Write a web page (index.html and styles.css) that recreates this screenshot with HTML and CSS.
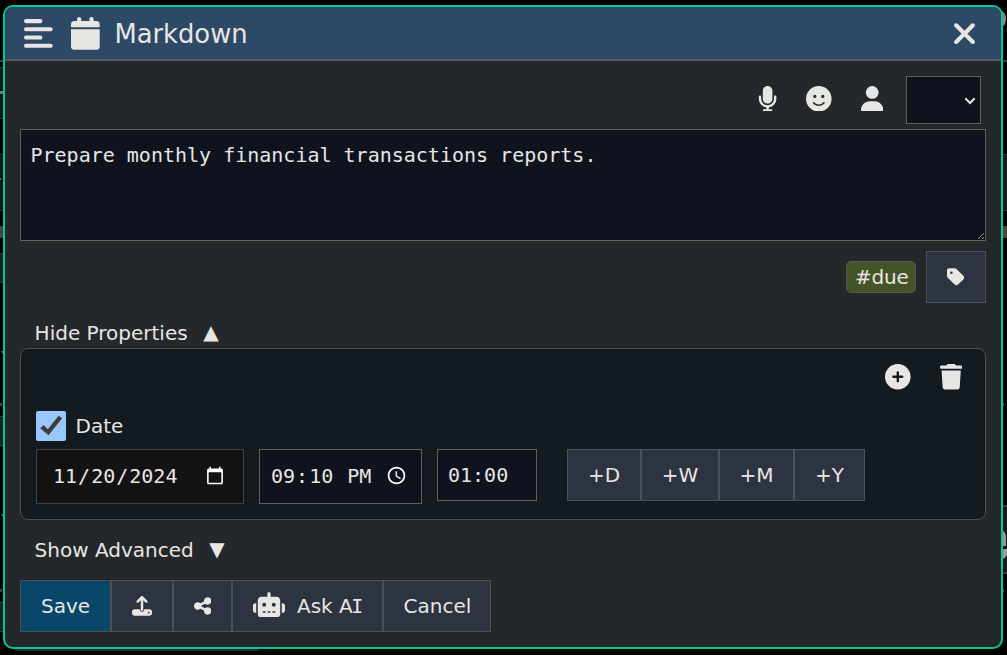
FILE: index.html
```html
<!DOCTYPE html>
<html lang="en">
<head>
<meta charset="utf-8">
<title>Markdown</title>
<link rel="stylesheet" href="styles.css">
</head>
<body>
<svg class="backdrop" width="1007" height="655" aria-hidden="true">
  <path fill="#3c3f41" d="M0 60h4v2H0zM1002 60h5v2h-5z"/>
  <path fill="#111518" d="M0 67h4v51H0zM0 154h4v56H0z"/>
  <path fill="#2e3335" d="M0 67h4v1H0zM0 118h4v1H0zM0 154h4v1H0zM0 210h4v1H0z"/>
  <path fill="#777" d="M0 91h4v3H0z"/>
  <path fill="#8a6a45" d="M0 178h1v2H0z"/>
  <path fill="#4a443c" d="M0 226h4v12H0zM1002 226h5v12h-5z"/>
  <path fill="#1c1f20" stroke="#3c4042" d="M-2 253.500h7v29h-7zM-2 416.500h7v29h-7zM-2 602.500h7v29h-7z"/>
  <path fill="#5b7087" d="M1 351h3v2l-1 1zM1 514h3v2l-1 1z"/>
  <path fill="#444" d="M0 403h2v3H0zM0 589h2v3H0zM1002 403h2v3h-2zM1002 589h2v3h-2z"/>
  <ellipse cx="1001" cy="19" rx="5" ry="8" fill="#93807a"/>
  <path fill="#151719" stroke="#2e3335" d="M1000 154.500h9v56h-9zM1000 506h9v67h-9z"/>
  <path fill="#3e3a33" d="M1002 505h5v2h-5zM1002 572h5v2h-5z"/>
  <path fill="#999" d="M1002 530q4 2 4 8v8h-4zM1002 549h5v6q-2 4-5 4z"/>
  <path fill="#25282a" d="M15 648h244v3H15z"/>
</svg>
<main class="dialog">
  <header class="titlebar">
    <svg class="icon-lg" viewBox="0 0 448 512"><path d="M288 64c0 17.700-14.300 32-32 32H32C14.300 96 0 81.700 0 64S14.300 32 32 32H256c17.700 0 32 14.300 32 32zm0 256c0 17.700-14.300 32-32 32H32c-17.700 0-32-14.300-32-32s14.300-32 32-32H256c17.700 0 32 14.300 32 32zM0 192c0-17.700 14.300-32 32-32H416c17.700 0 32 14.300 32 32s-14.300 32-32 32H32c-17.700 0-32-14.300-32-32zM448 448c0 17.700-14.300 32-32 32H32c-17.700 0-32-14.300-32-32s14.300-32 32-32H416c17.700 0 32 14.300 32 32z"/></svg>
    <svg class="icon-lg" viewBox="0 0 448 512"><path d="M96 32V64H48C21.500 64 0 85.500 0 112v48H448V112c0-26.500-21.500-48-48-48H352V32c0-17.700-14.300-32-32-32s-32 14.300-32 32V64H160V32c0-17.700-14.300-32-32-32S96 14.300 96 32zM448 192H0V464c0 26.500 21.500 48 48 48H400c26.500 0 48-21.500 48-48V192z"/></svg>
    <h1 class="title">Markdown</h1>
    <svg class="icon-close" viewBox="0 0 384 512"><path d="M342.600 150.600c12.500-12.500 12.500-32.800 0-45.300s-32.800-12.500-45.300 0L192 210.700 86.600 105.400c-12.500-12.500-32.800-12.500-45.300 0s-12.500 32.800 0 45.300L146.700 256 41.400 361.400c-12.500 12.500-12.500 32.800 0 45.300s32.800 12.500 45.300 0L192 301.300 297.400 406.600c12.500 12.500 32.800 12.500 45.300 0s12.500-32.800 0-45.300L237.300 256 342.600 150.600z"/></svg>
  </header>
  <div class="content">
    <div class="toolbar">
      <svg class="icon-md" viewBox="0 0 384 512"><path d="M192 0C139 0 96 43 96 96V256c0 53 43 96 96 96s96-43 96-96V96c0-53-43-96-96-96zM64 216c0-13.300-10.700-24-24-24s-24 10.700-24 24v40c0 89.100 66.200 162.700 152 174.400V464H120c-13.300 0-24 10.700-24 24s10.700 24 24 24h144c13.300 0 24-10.700 24-24s-10.700-24-24-24H216V430.400c85.800-11.700 152-85.300 152-174.400V216c0-13.300-10.700-24-24-24s-24 10.700-24 24v40c0 70.700-57.300 128-128 128s-128-57.300-128-128V216z"/></svg>
      <svg class="icon-md" viewBox="0 0 512 512"><path d="M256 512A256 256 0 1 0 256 0a256 256 0 1 0 0 512zM164.100 325.500C182 346.200 212.600 368 256 368s74-21.800 91.900-42.500c5.800-6.700 15.900-7.400 22.600-1.600s7.400 15.900 1.600 22.600C349.800 372.100 311.100 400 256 400s-93.800-27.900-116.100-53.500c-5.800-6.700-5.100-16.800 1.600-22.600s16.800-5.100 22.600 1.600zM144.400 208a32 32 0 1 1 64 0 32 32 0 1 1-64 0zm192-32a32 32 0 1 1 0 64 32 32 0 1 1 0-64z"/></svg>
      <svg class="icon-md" viewBox="0 0 448 512"><path d="M224 256A128 128 0 1 0 224 0a128 128 0 1 0 0 256zm-45.700 48C79.800 304 0 383.800 0 482.300C0 498.700 13.300 512 29.700 512H418.300c16.400 0 29.700-13.300 29.700-29.700C448 383.800 368.200 304 269.700 304H178.300z"/></svg>
      <div class="picker-wrap">
        <select class="picker" aria-label="Encrypt"><option></option></select>
        <svg class="chevron" viewBox="0 0 12 8"><path d="M1.300 1.300L6 6l4.700-4.700"/></svg>
      </div>
    </div>
    <textarea class="editor" spellcheck="false">Prepare monthly financial transactions reports.</textarea>
    <div class="tags">
      <span class="tag">#due</span>
      <button class="btn btn-tag" aria-label="Tag"><svg class="icon-sm" viewBox="0 0 448 512"><path d="M0 80V229.500c0 17 6.700 33.300 18.700 45.300l176 176c25 25 65.500 25 90.500 0L418.700 317.300c25-25 25-65.500 0-90.500l-176-176c-12-12-28.300-18.700-45.300-18.700H48C21.500 32 0 53.500 0 80zm112 32a32 32 0 1 1 0 64 32 32 0 1 1 0-64z"/></svg></button>
    </div>
    <div class="toggle"><span>Hide Properties</span><span class="arrow">▲</span></div>
    <section class="panel">
      <div class="panel-tools">
        <svg class="icon-md" viewBox="0 0 512 512"><path d="M256 512A256 256 0 1 0 256 0a256 256 0 1 0 0 512zM232 344V280H168c-13.300 0-24-10.700-24-24s10.700-24 24-24h64V168c0-13.300 10.700-24 24-24s24 10.700 24 24v64h64c13.300 0 24 10.700 24 24s-10.700 24-24 24H280v64c0 13.300-10.700 24-24 24s-24-10.700-24-24z"/></svg>
        <svg class="icon-md" viewBox="0 0 448 512"><path d="M135.200 17.700C140.600 6.800 151.700 0 163.800 0H284.200c12.100 0 23.200 6.800 28.600 17.700L320 32h96c17.700 0 32 14.300 32 32s-14.300 32-32 32H32C14.300 96 0 81.700 0 64S14.300 32 32 32h96l7.200-14.300zM32 128H416L394.800 467c-1.600 25.300-22.600 45-47.900 45H101.100c-25.300 0-46.300-19.700-47.900-45L32 128z"/></svg>
      </div>
      <label class="check"><input class="checkbox" type="checkbox" checked><svg class="tick" viewBox="0 0 30 30"><path d="M4.300 17.200L7.500 14l4.300 4.300L22.700 4.700l3.400 2.600L12.500 24.300z"/></svg><span>Date</span></label>
      <div class="fields">
        <input class="field date" type="date" value="2024-11-20">
        <input class="field time" type="time" value="21:10">
        <input class="field duration" type="text" value="01:00">
        <div class="group">
          <button class="btn add-d">+D</button><button class="btn add-w">+W</button><button class="btn add-m">+M</button><button class="btn add-y">+Y</button>
        </div>
      </div>
    </section>
    <div class="toggle advanced"><span>Show Advanced</span><span class="arrow">▼</span></div>
    <footer class="group actions">
      <button class="btn save">Save</button>
      <button class="btn upload" aria-label="Upload"><svg class="icon-sm" viewBox="0 0 512 512"><path d="M256 0c-9 0-17 3-23 9L121 121c-12 12-12 33 0 45s33 12 45 0l58-57v243c0 18 14 32 32 32s32-14 32-32V109l58 57c12 12 33 12 45 0s12-33 0-45L279 9c-6-6-14-9-23-9zM64 340c-35 0-64 29-64 64v40c0 35 29 64 64 64h384c35 0 64-29 64-64v-40c0-35-29-64-64-64H310v12c0 32-24 54-54 54s-54-22-54-54v-12zm368 60a24 24 0 1 1 0 48 24 24 0 1 1 0-48z"/></svg></button>
      <button class="btn share" aria-label="Share"><svg class="icon-sm" viewBox="0 0 448 512"><path d="M352 224c53 0 96-43 96-96s-43-96-96-96s-96 43-96 96c0 4 .2 8 .7 11.900l-94.100 47C145.400 170.200 121.900 160 96 160c-53 0-96 43-96 96s43 96 96 96c25.900 0 49.400-10.200 66.600-26.900l94.100 47c-.5 3.900-.7 7.800-.7 11.900c0 53 43 96 96 96s96-43 96-96s-43-96-96-96c-25.900 0-49.400 10.200-66.600 26.900l-94.100-47c.5-3.900 .7-7.800 .7-11.900s-.2-8-.7-11.900l94.100-47C302.600 213.800 326.100 224 352 224z"/></svg></button>
      <button class="btn ask"><svg class="icon-md" viewBox="0 0 640 512"><path d="M320 0c17.700 0 32 14.300 32 32V96H472c39.800 0 72 32.200 72 72V440c0 39.800-32.200 72-72 72H168c-39.800 0-72-32.200-72-72V168c0-39.800 32.200-72 72-72H288V32c0-17.700 14.300-32 32-32zM208 384c-8.800 0-16 7.200-16 16s7.200 16 16 16h32c8.800 0 16-7.200 16-16s-7.200-16-16-16H208zm96 0c-8.800 0-16 7.200-16 16s7.200 16 16 16h32c8.800 0 16-7.200 16-16s-7.200-16-16-16H304zm96 0c-8.800 0-16 7.200-16 16s7.200 16 16 16h32c8.800 0 16-7.200 16-16s-7.200-16-16-16H400zM264 256a40 40 0 1 0-80 0 40 40 0 1 0 80 0zm152 40a40 40 0 1 0 0-80 40 40 0 1 0 0 80zM48 224H64V416H48c-26.500 0-48-21.500-48-48V272c0-26.500 21.500-48 48-48zm544 0c26.500 0 48 21.500 48 48v96c0 26.500-21.500 48-48 48H576V224h16z"/></svg><span>Ask A<span class="serif-i">I</span></span></button>
      <button class="btn cancel">Cancel</button>
    </footer>
  </div>
</main>
</body>
</html>
```
FILE: styles.css
```css
:root { color-scheme: dark; }
* { box-sizing: border-box; }
body {
  margin: 0;
  height: 655px;
  padding: 5px 4px 6px 3px;
  overflow: hidden;
  background: #000;
  color: #e8e6e3;
  font: 20px/24px "DejaVu Sans", sans-serif;
}
svg { display: block; flex: none; fill: #e8e6e3; }
.backdrop { position: absolute; top: 0; left: 0; }
.dialog {
  position: relative;
  height: 644px;
  border: 2px solid #00c896;
  border-radius: 10px;
  overflow: hidden;
  background: #25282a;
}
.titlebar {
  display: flex;
  align-items: center;
  height: 54px;
  padding: 1px 24px 0 19px;
  gap: 18.500px;
  border-bottom: 2px solid #545b5e;
  background: #2d4966;
}
.title { flex: 1; margin: 1px 0 0 -4px; font-size: 25.800px; line-height: 32px; font-weight: 400; }
.icon-lg { width: 28.700px; height: 32.800px; }
.icon-close { width: 25px; height: 33.300px; margin-top: 1px; }
.icon-md { height: 25.600px; }
.icon-sm { height: 20px; }
.content { padding: 15px 15px 0; }
.toolbar {
  display: flex;
  align-items: center;
  justify-content: flex-end;
  height: 48px;
  padding-right: 5px;
  margin-bottom: 5px;
  gap: 29px;
}
.toolbar .icon-md { margin-top: -3px; }
.picker-wrap { position: relative; width: 75px; height: 48px; margin-left: -6px; }
.picker {
  display: block;
  width: 100%;
  height: 100%;
  margin: 0;
  border: 1px solid #665f53;
  border-radius: 0;
  appearance: none;
  background: #0f131e;
  color: #e8e6e3;
  font: inherit;
}
.chevron {
  position: absolute;
  top: 21px;
  right: 5px;
  width: 12px;
  height: 8px;
  fill: none;
  stroke: #e8e6e3;
  stroke-width: 2;
  pointer-events: none;
}
.editor {
  display: block;
  width: 966px;
  height: 112px;
  margin: 0;
  padding: 12px 9.500px;
  border: 1px solid #665f53;
  outline: 0;
  background: #0f131e;
  color: #e8e6e3;
  font: 20px/26px "DejaVu Sans Mono", monospace;
}
.tags {
  display: flex;
  align-items: center;
  justify-content: flex-end;
  gap: 10px;
  height: 52px;
  margin-top: 10px;
}
.tag {
  width: 70px;
  height: 32px;
  padding: 3px 0 3px 8px;
  border: 1px solid #4f585c;
  border-radius: 5px;
  background: #455426;
  white-space: nowrap;
  letter-spacing: -0.200px;
}
.btn {
  display: flex;
  align-items: center;
  justify-content: center;
  height: 52px;
  padding: 0;
  border: 1px solid #4b5154;
  border-radius: 0;
  background: #2d3340;
  color: #e8e6e3;
  font: inherit;
}
.btn-tag { width: 60px; }
.btn-tag svg { margin-bottom: 1px; }
.toggle { display: flex; gap: 15.500px; height: 27px; margin-top: 18px; padding-left: 14.600px; }
.arrow { margin-top: -1px; }
.panel {
  height: 172px;
  padding: 15px;
  border: 1px solid #4b5154;
  border-radius: 8px;
  background: #131a20;
}
.panel-tools {
  display: flex;
  justify-content: flex-end;
  gap: 29px;
  height: 47px;
  padding-right: 8px;
}
.check { position: relative; display: flex; align-items: center; gap: 9.500px; height: 30px; }
.checkbox { appearance: none; width: 30px; height: 30px; margin: 0; border-radius: 2px; background: #99c8ff; }
.tick { position: absolute; top: 0; left: 0; width: 30px; height: 30px; fill: #3b3b3b; }
.fields { display: flex; align-items: flex-start; gap: 15px; margin-top: 8px; }
.field {
  height: 55px;
  margin: 0;
  padding: 0 10px 2px;
  border: 1px solid #665f53;
  border-radius: 0;
  outline: 0;
  background: #0f131e;
  color: #e8e6e3;
  font: 20px "DejaVu Sans Mono", monospace;
}
.date { width: 208px; padding: 0 16px 2px 15px; border-color: #404346; background: #131313; }
.time { width: 163px; padding-right: 11px; }
.duration { width: 100px; height: 52px; padding-bottom: 0; }
.group { display: flex; }
.fields .group { margin-left: 15px; }
.add-d { width: 74px; }
.add-w { width: 78px; }
.add-m { width: 75px; }
.add-y { width: 71px; }
.advanced { margin-top: 18px; }
.actions { margin-top: 15px; }
.save { width: 91px; background: #08476a; }
.upload { width: 62px; padding-right: 1px; }
.share { width: 59px; }
.ask { width: 151px; justify-content: flex-start; padding-left: 20px; gap: 12px; }
.ask svg { margin-bottom: 3px; }
.serif-i { margin-left: -1.500px; font-family: "DejaVu Sans Mono", monospace; }
.cancel { width: 108px; padding-left: 1px; }
```
